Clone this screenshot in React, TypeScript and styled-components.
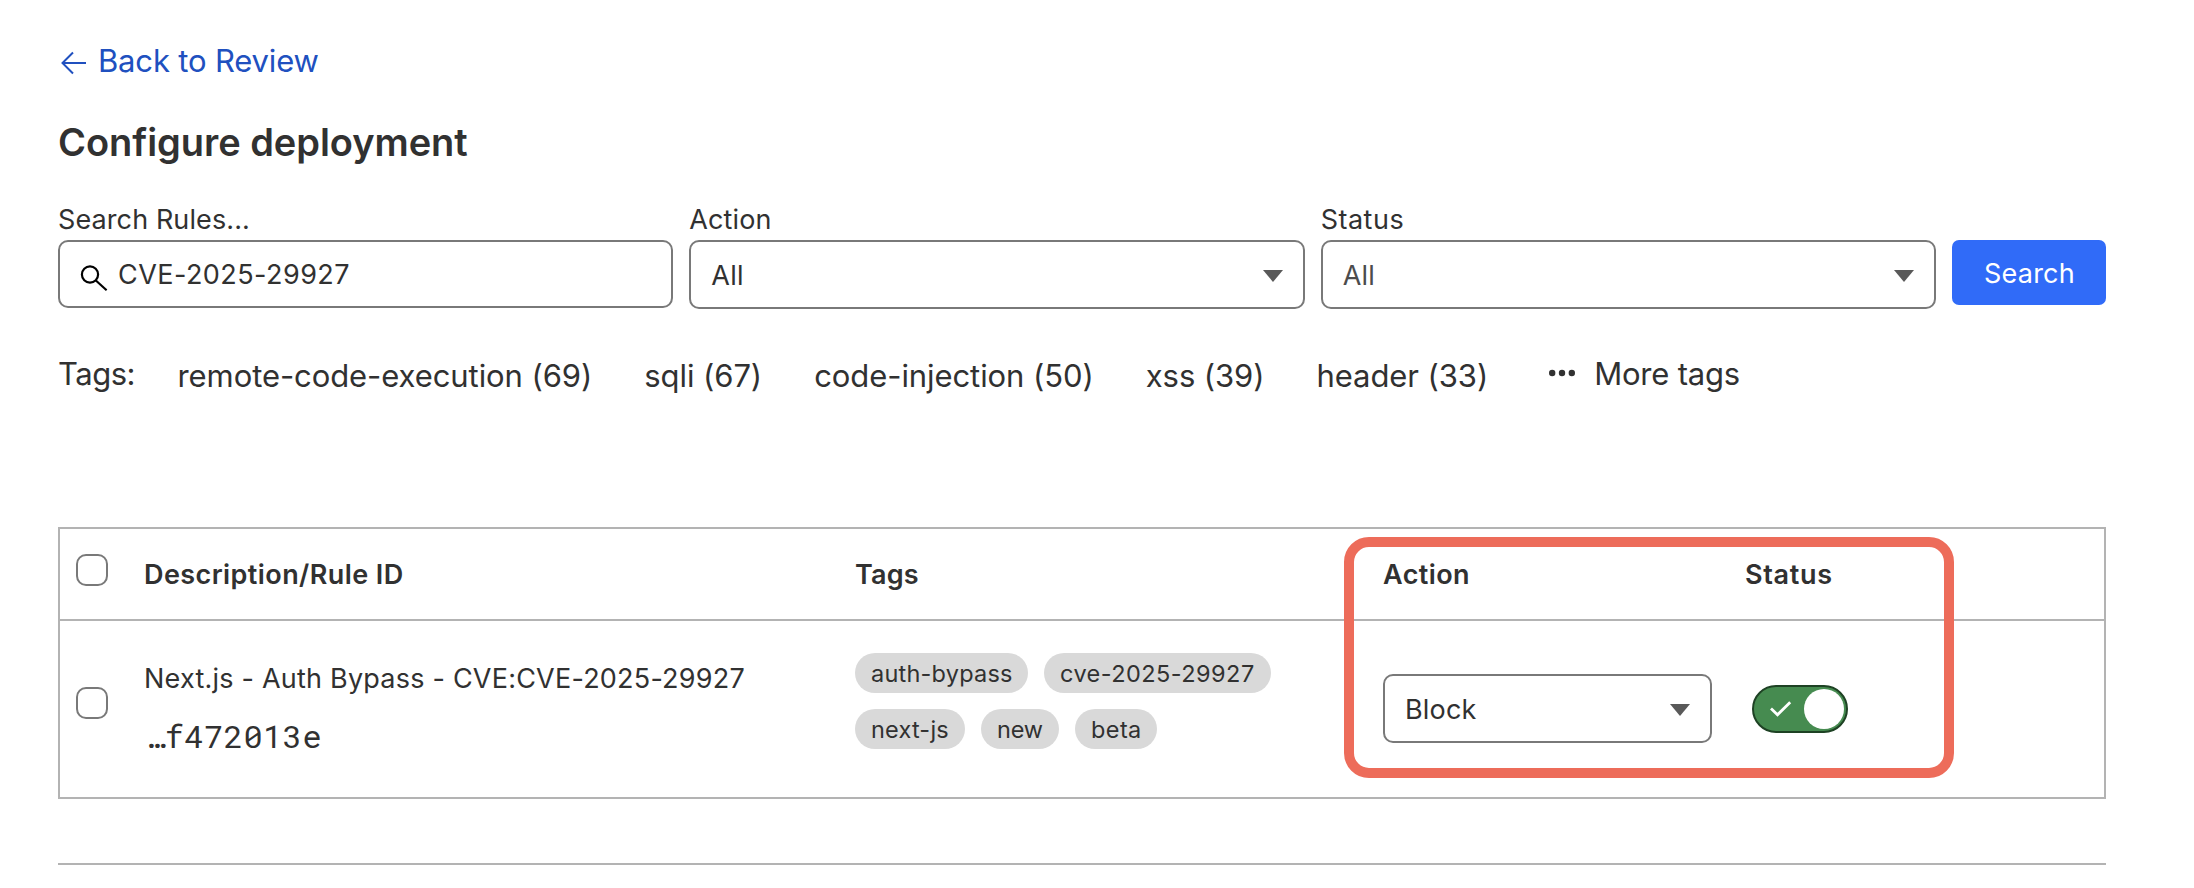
import React from 'react';
import styled, { createGlobalStyle } from 'styled-components';

const GlobalStyle = createGlobalStyle`
  * { box-sizing: border-box; }
  body {
    margin: 0;
    background: #fff;
    color: #313131;
    font-family: Inter, "Liberation Sans", sans-serif;
    font-size: 27px;
    line-height: 35px;
    letter-spacing: 0.22px;
  }
`;

const Page = styled.main`
  width: 2194px;
  height: 888px;
  padding: 41px 88px 0 58px;
  overflow: hidden;
`;

const BackLink = styled.a`
  display: flex;
  align-items: center;
  gap: 12px;
  padding-left: 2px;
  width: max-content;
  color: #2050bf;
  font-size: 31px;
  line-height: 40px;
  letter-spacing: -0.17px;
  text-decoration: none;

  svg {
    margin-top: 3px;
  }
`;

const Title = styled.h1`
  margin: 37px 0 36px;
  font-size: 38px;
  font-weight: 600;
  line-height: 48px;
  letter-spacing: -0.05px;
`;

const Filters = styled.form`
  display: grid;
  grid-template-columns: repeat(3, 1fr) 154px;
  column-gap: 16px;
  align-items: start;
`;

const Field = styled.label<{ $spacing?: string }>`
  display: flex;
  flex-direction: column;
  gap: 3px;
  letter-spacing: ${(p) => p.$spacing ?? '0.1px'};
`;

const SearchBox = styled.div`
  display: flex;
  align-items: center;
  gap: 10px;
  height: 68px;
  padding: 0 20px;
  border: 2px solid #797979;
  border-radius: 10px;

  svg {
    margin-top: 9px;
  }
`;

const SearchInput = styled.input`
  flex: 1;
  min-width: 0;
  height: 36px;
  padding: 0;
  border: 0;
  outline: 0;
  background: none;
  color: inherit;
  font: inherit;
  letter-spacing: 0.45px;
`;

const SelectButton = styled.button<{ $muted?: boolean; $width?: string }>`
  display: flex;
  align-items: center;
  justify-content: space-between;
  width: ${(p) => p.$width ?? '100%'};
  height: 69px;
  padding: 2px 20px 0;
  border: 2px solid #797979;
  border-radius: 10px;
  background: #fff;
  color: ${(p) => (p.$muted ? '#4c4c4c' : '#313131')};
  font: inherit;
  letter-spacing: 0.2px;
`;

const SubmitButton = styled.button`
  height: 65px;
  margin-top: 38px;
  padding: 1px 0 0 1px;
  border: 0;
  border-radius: 7px;
  background: #306bf8;
  color: #fff;
  font: inherit;
  letter-spacing: inherit;
`;

const TagBar = styled.div`
  display: flex;
  align-items: flex-start;
  height: 39px;
  margin: 46px 0 133px;
  font-size: 31px;
  line-height: 37px;
  letter-spacing: -0.08px;
`;

const TagBarLabel = styled.span`
  width: 119.5px;
  letter-spacing: -0.5px;
`;

const TagLinks = styled.div`
  display: flex;
  gap: 52.1px;
  padding-top: 2px;
`;

const MoreTags = styled.span`
  display: flex;
  align-items: center;
  gap: 19px;
  margin-left: 61px;
  letter-spacing: -0.2px;

  svg {
    margin-top: -1px;
  }
`;

const Table = styled.section`
  position: relative;
  height: 272px;
  border: 2px solid #b3b3b3;
`;

const Row = styled.div`
  display: grid;
  grid-template-columns: 84px 711px 528px 362px 1fr;
  align-items: start;
`;

const HeaderRow = styled(Row)`
  height: 92px;
  padding-top: 25px;
  border-bottom: 2px solid #b3b3b3;
`;

const BodyRow = styled(Row)`
  padding-top: 32px;
`;

const Heading = styled.span<{ $spacing?: string }>`
  padding-top: 3px;
  font-weight: 600;
  letter-spacing: ${(p) => p.$spacing ?? '0.42px'};
`;

const Cell = styled.div<{ $drop?: number }>`
  padding-top: ${(p) => p.$drop ?? 0}px;
`;

const Checkbox = styled.span`
  display: block;
  width: 32px;
  height: 32px;
  margin-left: 16px;
  border: 2px solid #797979;
  border-radius: 10px;
`;

const RuleId = styled.div`
  margin: 18px 0 0 1px;
  font-family: "Roboto Mono", "DejaVu Sans Mono", monospace;
  font-size: 32px;
  line-height: 43px;
  letter-spacing: 0.48px;
`;

const Pills = styled.div`
  display: flex;
  flex-wrap: wrap;
  gap: 16px;
  width: 440px;
`;

const Pill = styled.span<{ $width: number; $spacing?: number }>`
  width: ${(p) => p.$width}px;
  height: 40px;
  padding-left: 16px;
  border-radius: 20px;
  background: #d9d9d9;
  font-size: 23.5px;
  line-height: 41px;
  letter-spacing: ${(p) => p.$spacing ?? 0.2}px;
  white-space: nowrap;
`;

const Toggle = styled.span`
  display: flex;
  align-items: center;
  justify-content: space-between;
  width: 96px;
  height: 48px;
  margin-left: 7px;
  padding: 0 2px 0 16px;
  border: 2px solid #1e4224;
  border-radius: 24px;
  background: #468b50;
`;

const Knob = styled.span`
  width: 40px;
  height: 40px;
  border-radius: 50%;
  background: #fff;
`;

const Highlight = styled.div`
  position: absolute;
  top: 8px;
  left: 1284px;
  width: 610px;
  height: 241px;
  border: 10px solid #ed6c5a;
  border-radius: 25px;
  pointer-events: none;
`;

const Divider = styled.hr`
  height: 2px;
  margin: 64px 0 0;
  border: 0;
  background: #b3b3b3;
`;

const ArrowIcon = () => (
  <svg width="26" height="24" viewBox="0 0 26 24" fill="none" stroke="currentColor" strokeWidth="2">
    <path d="M26 12H2M13 1.5L2.5 12l10.5 10.5" />
  </svg>
);

const SearchIcon = () => (
  <svg width="28" height="28" viewBox="0 0 28 28" fill="none" stroke="#000" strokeWidth="2.2">
    <circle cx="10" cy="9.5" r="8.1" />
    <path d="M15.6 15.2L26.6 25.2" />
  </svg>
);

const Caret = () => (
  <svg width="20" height="12" viewBox="0 0 20 12">
    <path d="M0 0h20L10 12z" fill="#595959" />
  </svg>
);

const DotsIcon = () => (
  <svg width="26" height="8" viewBox="0 0 26 8" fill="#313131">
    <circle cx="3.2" cy="4" r="3.2" />
    <circle cx="13" cy="4" r="3.2" />
    <circle cx="22.8" cy="4" r="3.2" />
  </svg>
);

const CheckIcon = () => (
  <svg width="22" height="16" viewBox="0 0 22 16" fill="none" stroke="#fff" strokeWidth="2.8">
    <path d="M1 7.5L7.5 13.8L20.2 1.2" />
  </svg>
);

const tagLinks = [
  'remote-code-execution (69)',
  'sqli (67)',
  'code-injection (50)',
  'xss (39)',
  'header (33)',
];

const ruleTags = [
  { name: 'auth-bypass', width: 173, spacing: 0.22 },
  { name: 'cve-2025-29927', width: 227, spacing: 0.45 },
  { name: 'next-js', width: 110, spacing: 0.2 },
  { name: 'new', width: 78, spacing: -0.2 },
  { name: 'beta', width: 82, spacing: 0.4 },
];

export default function App() {
  return (
    <>
      <GlobalStyle />
      <Page>
        <BackLink>
          <ArrowIcon />
          Back to Review
        </BackLink>
        <Title>Configure deployment</Title>
        <Filters>
          <Field>
            Search Rules...
            <SearchBox>
              <SearchIcon />
              <SearchInput defaultValue="CVE-2025-29927" />
            </SearchBox>
          </Field>
          <Field>
            Action
            <SelectButton type="button">
              All
              <Caret />
            </SelectButton>
          </Field>
          <Field $spacing="0.5px">
            Status
            <SelectButton type="button" $muted>
              All
              <Caret />
            </SelectButton>
          </Field>
          <SubmitButton type="button">Search</SubmitButton>
        </Filters>
        <TagBar>
          <TagBarLabel>Tags:</TagBarLabel>
          <TagLinks>
            {tagLinks.map((tag) => (
              <span key={tag}>{tag}</span>
            ))}
          </TagLinks>
          <MoreTags>
            <DotsIcon />
            More tags
          </MoreTags>
        </TagBar>
        <Table>
          <HeaderRow>
            <Checkbox />
            <Heading>Description/Rule ID</Heading>
            <Heading $spacing="0.15px">Tags</Heading>
            <Heading>Action</Heading>
            <Heading $spacing="0.7px">Status</Heading>
          </HeaderRow>
          <BodyRow>
            <Cell $drop={34}>
              <Checkbox />
            </Cell>
            <Cell $drop={8}>
              Next.js - Auth Bypass - CVE:CVE-2025-29927
              <RuleId>…f472013e</RuleId>
            </Cell>
            <Pills>
              {ruleTags.map((tag) => (
                <Pill key={tag.name} $width={tag.width} $spacing={tag.spacing}>
                  {tag.name}
                </Pill>
              ))}
            </Pills>
            <Cell $drop={21}>
              <SelectButton type="button" $width="329px">
                Block
                <Caret />
              </SelectButton>
            </Cell>
            <Cell $drop={32}>
              <Toggle>
                <CheckIcon />
                <Knob />
              </Toggle>
            </Cell>
          </BodyRow>
          <Highlight />
        </Table>
        <Divider />
      </Page>
    </>
  );
}
